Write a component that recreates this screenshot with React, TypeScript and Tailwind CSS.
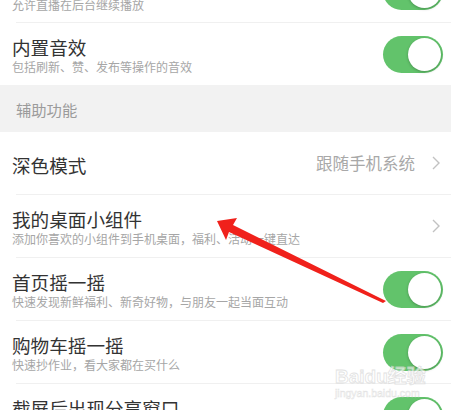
import React from 'react';

const font = { fontFamily: '"Noto Sans CJK SC", "Noto Sans", sans-serif' };

function Toggle({ className = '' }: { className?: string }) {
  return (
    <div className={`relative h-[37px] w-[60px] shrink-0 rounded-full bg-[#62c36b] ${className}`}>
      <div className="absolute right-[2px] top-[2px] h-[33px] w-[33px] rounded-full bg-white shadow-[0_1px_3px_rgba(0,0,0,0.25)]" />
    </div>
  );
}

function Chevron() {
  return (
    <svg width="10" height="16" viewBox="0 0 10 16" className="shrink-0">
      <polyline points="2,2 8,8 2,14" fill="none" stroke="#c2c2c2" strokeWidth="1.4" />
    </svg>
  );
}

type Row = {
  title: string;
  sub?: string;
  value?: string;
  kind: 'toggle' | 'link';
  keepSpace?: boolean;
};

function SettingRow({ row }: { row: Row }) {
  return (
    <div className="flex h-[62px] items-center bg-white pl-3 pr-2">
      <div className="flex min-w-0 flex-1 flex-col pt-[3px]">
        <div className="text-[18.6px] leading-[22px] text-[#333] whitespace-nowrap">{row.title}</div>
        {row.sub && (
          <div className="mt-[1px] text-[12px] leading-[16px] text-[#a6a6a6] whitespace-nowrap">{row.sub}</div>
        )}
        {row.keepSpace && <div className="h-[17px]" />}
      </div>
      {row.kind === 'toggle' ? (
        <Toggle />
      ) : (
        <div className="flex items-center gap-4 pr-[2px]">
          {row.value && <span className="text-[16.5px] text-[#a8a8a8]">{row.value}</span>}
          <Chevron />
        </div>
      )}
    </div>
  );
}

const Divider = () => <div className="ml-4 h-px bg-[#f0f0f0]" />;

export default function App() {
  return (
    <div className="relative h-[410px] w-[451px] overflow-hidden bg-white" style={font}>
      {/* row cut off by the top edge */}
      <div className="flex h-[22px] items-start bg-white pl-3 pr-2">
        <div className="flex-1 -mt-[3px] text-[12px] leading-[16px] text-[#a6a6a6] whitespace-nowrap">
          允许直播在后台继续播放
        </div>
        <Toggle className="-mt-[27px]" />
      </div>
      <Divider />
      <SettingRow row={{ title: '内置音效', sub: '包括刷新、赞、发布等操作的音效', kind: 'toggle' }} />

      <div className="flex h-[47px] items-center bg-[#f2f2f2] pl-4 pt-[2px] text-[15.3px] text-[#9b9b9b]">
        辅助功能
      </div>

      <SettingRow row={{ title: '深色模式', value: '跟随手机系统', kind: 'link' }} />
      <Divider />
      <SettingRow
        row={{ title: '我的桌面小组件', sub: '添加你喜欢的小组件到手机桌面，福利、活动一键直达', kind: 'link' }}
      />
      <Divider />
      <SettingRow
        row={{ title: '首页摇一摇', sub: '快速发现新鲜福利、新奇好物，与朋友一起当面互动', kind: 'toggle' }}
      />
      <Divider />
      <SettingRow row={{ title: '购物车摇一摇', sub: '快速抄作业，看大家都在买什么', kind: 'toggle' }} />
      <Divider />
      <SettingRow row={{ title: '截屏后出现分享窗口', kind: 'toggle', keepSpace: true }} />

      {/* watermark */}
      <div className="pointer-events-none absolute left-[335px] top-[366px] flex flex-col items-start opacity-70">
        <div
          className="text-[19px] font-bold leading-[21px] text-white"
          style={{ fontFamily: '"Liberation Sans", "Noto Sans CJK SC", sans-serif', WebkitTextStroke: '0.8px #d6d6d6' }}
        >
          Baidu经验
        </div>
        <div
          className="text-[10.5px] leading-[13px] text-white"
          style={{ fontFamily: '"Liberation Sans", sans-serif', WebkitTextStroke: '0.5px #d6d6d6' }}
        >
          jingyan.baidu.com
        </div>
      </div>

      {/* red arrow annotation */}
      <svg className="pointer-events-none absolute left-0 top-0" width="451" height="410" viewBox="0 0 451 410">
        <polygon points="217,221 237,218 233,225 386,301 383,303 229,232 226,240" fill="#f0211b" />
      </svg>
    </div>
  );
}
